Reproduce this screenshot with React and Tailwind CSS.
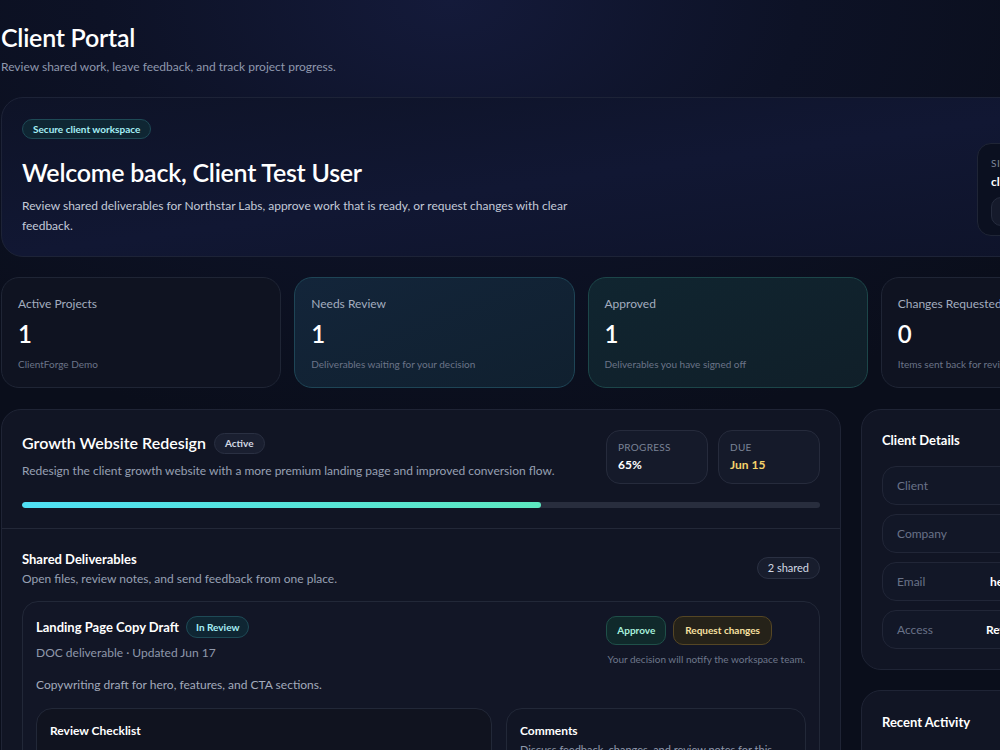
const stats = [
  { label: "Active Projects", value: "1", sub: "ClientForge Demo", tone: "plain" },
  { label: "Needs Review", value: "1", sub: "Deliverables waiting for your decision", tone: "blue" },
  { label: "Approved", value: "1", sub: "Deliverables you have signed off", tone: "teal" },
  { label: "Changes Requested", value: "0", sub: "Items sent back for revision", tone: "plain" },
];

const toneClass = {
  plain: "bg-[#0f1321] border-[#1f2535]",
  blue: "bg-gradient-to-br from-[#13253a] to-[#10202f] border-[#1e4556]",
  teal: "bg-gradient-to-br from-[#102530] to-[#101f29] border-[#1c4649]",
};

const details = [
  ["Client", "Client Test User", "w-[100px]"],
  ["Company", "Northstar Labs", "w-[90px]"],
  ["Email", "hello@northstarlabs.com", "w-[134px]"],
  ["Access", "Review and approve", "w-[138px]"],
];

function StatCard({ label, value, sub, tone }) {
  return (
    <div className={`h-[111px] rounded-[18px] border px-[16px] pt-[18px] ${toneClass[tone]}`}>
      <p className="text-[12px] leading-[16px] text-[#a3adbf]">{label}</p>
      <p className="mt-[8px] text-[24px] leading-[28px] font-semibold text-white">{value}</p>
      <p className="mt-[9px] text-[10px] leading-[14px] text-[#6b7488]">{sub}</p>
    </div>
  );
}

export default function App() {
  return (
    <div
      className="w-[1000px] h-[750px] overflow-hidden bg-[radial-gradient(ellipse_70%_60%_at_45%_0%,#141a3a_0%,#0d1226_50%,#0a0e1b_100%)] text-white"
      style={{ fontFamily: "Lato, 'Noto Sans', sans-serif" }}
    >
      <div className="w-[1160px] ml-px pt-[21px]">
        <h1 className="text-[25px] leading-[32px] font-semibold tracking-[-0.01em] text-white">Client Portal</h1>
        <p className="mt-[6px] text-[12px] leading-[16px] text-[#8f98ad]">
          Review shared work, leave feedback, and track project progress.
        </p>

        <section className="mt-[22px] h-[160px] rounded-[22px] border border-[#1d2337] bg-gradient-to-br from-[#0e1327] via-[#111733] to-[#0e1329] px-[20px] pt-[21px] flex justify-between items-end pb-[20px]">
          <div>
            <span className="inline-flex h-[20px] items-center rounded-full border border-[#1e4a56] bg-[#0f2633] px-[10px] text-[10px] font-bold text-[#a5eef5]">
              Secure client workspace
            </span>
            <h2 className="mt-[17px] text-[25px] leading-[32px] font-semibold tracking-[-0.01em]">Welcome back, Client Test User</h2>
            <p className="mt-[8px] max-w-[560px] text-[12px] leading-[20px] text-[#c3cad8]">
              Review shared deliverables for Northstar Labs, approve work that is ready, or request changes with clear feedback.
            </p>
          </div>
          <div className="w-[163px] h-[93px] rounded-[14px] border border-[#1f2536] bg-[#0b1020] px-[13px] pt-[12px]">
            <p className="text-[10px] leading-[14px] uppercase tracking-[0.06em] text-[#7d8699]">Signed in as</p>
            <p className="mt-[3px] text-[12px] leading-[18px] font-bold text-white">client@northstar.io</p>
            <div className="mt-[6px] h-[29px] w-[80px] rounded-[10px] border border-[#252b3d] bg-[#151a2b]" />
          </div>
        </section>

        <div className="mt-[20px] grid grid-cols-4 gap-[13px]">
          {stats.map((s) => (
            <StatCard key={s.label} {...s} />
          ))}
        </div>

        <div className="mt-[21px] grid grid-cols-[840px_299px] gap-[20px]">
          <section className="rounded-[20px] border border-[#1f2435] bg-[#111524]">
            <div className="px-[20px] pt-[20px] pb-[20px] border-b border-[#232838]">
              <div className="flex justify-between items-start">
                <div>
                  <div className="flex items-center gap-[8px] pt-px">
                    <h3 className="text-[16px] leading-[24px] font-semibold">Growth Website Redesign</h3>
                    <span className="inline-flex h-[21px] items-center rounded-full border border-[#2a3042] bg-[#1a1f30] px-[10px] text-[10px] font-bold text-[#d2d8e4]">
                      Active
                    </span>
                  </div>
                  <p className="mt-[8px] text-[12px] leading-[16px] text-[#97a0b3]">
                    Redesign the client growth website with a more premium landing page and improved conversion flow.
                  </p>
                </div>
                <div className="flex gap-[10px]">
                  <div className="w-[102px] h-[54px] rounded-[14px] border border-[#262b3c] bg-[#151a2a] px-[11px] pt-[9px]">
                    <p className="text-[10px] leading-[14px] uppercase tracking-[0.03em] text-[#7a8396]">Progress</p>
                    <p className="mt-[3px] text-[12px] leading-[16px] font-bold text-white">65%</p>
                  </div>
                  <div className="w-[102px] h-[54px] rounded-[14px] border border-[#262b3c] bg-[#151a2a] px-[11px] pt-[9px]">
                    <p className="text-[10px] leading-[14px] uppercase tracking-[0.03em] text-[#7a8396]">Due</p>
                    <p className="mt-[3px] text-[12px] leading-[16px] font-bold text-[#f5d36a]">Jun 15</p>
                  </div>
                </div>
              </div>
              <div className="mt-[18px] h-[6px] rounded-full bg-[#282d3d] overflow-hidden">
                <div className="h-full rounded-full bg-gradient-to-r from-[#4fe0f5] to-[#5de8c0]" style={{ width: "65%" }} />
              </div>
            </div>

            <div className="px-[20px] pt-[20px]">
              <div className="flex justify-between items-center">
                <div>
                  <h4 className="text-[13px] leading-[20px] font-bold">Shared Deliverables</h4>
                  <p className="mt-[2px] text-[12px] leading-[16px] text-[#97a0b3]">Open files, review notes, and send feedback from one place.</p>
                </div>
                <span className="inline-flex h-[22px] items-center rounded-full border border-[#2a3042] bg-[#181d2d] px-[10px] text-[11px] text-[#d2d8e4]">
                  2 shared
                </span>
              </div>

              <div className="mt-[14px] rounded-[16px] border border-[#222838] bg-[#121626] px-[13px] pt-[14px] pb-[14px]">
                <div className="flex justify-between items-start">
                  <div>
                    <div className="flex items-center gap-[7px]">
                      <h5 className="text-[13px] leading-[22px] font-bold">Landing Page Copy Draft</h5>
                      <span className="inline-flex h-[22px] items-center rounded-full border border-[#1e4a56] bg-[#0f2633] px-[9px] text-[10px] font-bold text-[#a5eef5]">
                        In Review
                      </span>
                    </div>
                    <p className="mt-[7px] text-[12px] leading-[16px] text-[#8f98ab]">DOC deliverable · Updated Jun 17</p>
                    <p className="mt-[16px] text-[12px] leading-[16px] text-[#a2aabb]">Copywriting draft for hero, features, and CTA sections.</p>
                  </div>
                  <div className="flex flex-col items-end pr-px">
                    <div className="flex gap-[7px] mr-[33px]">
                      <button className="h-[29px] rounded-[10px] border border-[#1f5049] bg-[#10292b] px-[10px] text-[10px] font-bold text-[#a7f0dc]">
                        Approve
                      </button>
                      <button className="h-[29px] rounded-[10px] border border-[#554624] bg-[#252219] px-[11px] text-[10px] font-bold text-[#f8e0a0]">
                        Request changes
                      </button>
                    </div>
                    <p className="mt-[7px] text-[10px] leading-[14px] text-[#6e778b]">Your decision will notify the workspace team.</p>
                  </div>
                </div>

                <div className="mt-[15px] grid grid-cols-[456px_1fr] gap-[14px]">
                  <div className="h-[120px] rounded-[16px] border border-[#222838] bg-[#10131f] px-[13px] pt-[13px]">
                    <p className="text-[12px] leading-[18px] font-bold">Review Checklist</p>
                  </div>
                  <div className="h-[120px] rounded-[16px] border border-[#222838] bg-[#111524] px-[13px] pt-[13px]">
                    <p className="text-[12px] leading-[18px] font-bold">Comments</p>
                    <p className="mt-[2px] text-[11px] leading-[16px] text-[#8f98ab]">Discuss feedback, changes, and review notes for this deliverable.</p>
                  </div>
                </div>
              </div>
            </div>
          </section>

          <div className="flex flex-col gap-[20px]">
            <section className="rounded-[20px] border border-[#1f2435] bg-[#111524] px-[20px] pt-[20px] pb-[20px]">
              <h4 className="text-[13px] leading-[20px] font-bold">Client Details</h4>
              <div className="mt-[16px] flex flex-col gap-[9px]">
                {details.map(([k, v, w]) => (
                  <div key={k} className="h-[39px] flex items-center justify-between rounded-[14px] border border-[#212637] bg-[#121727] px-[14px]">
                    <span className="text-[12px] text-[#697287]">{k}</span>
                    <span className={`${w} overflow-hidden whitespace-nowrap text-[12px] font-bold text-white`}>{v}</span>
                  </div>
                ))}
              </div>
            </section>
            <section className="h-[200px] rounded-[20px] border border-[#1f2435] bg-[#111524] px-[20px] pt-[21px]">
              <h4 className="text-[13px] leading-[20px] font-bold">Recent Activity</h4>
            </section>
          </div>
        </div>
      </div>
    </div>
  );
}
